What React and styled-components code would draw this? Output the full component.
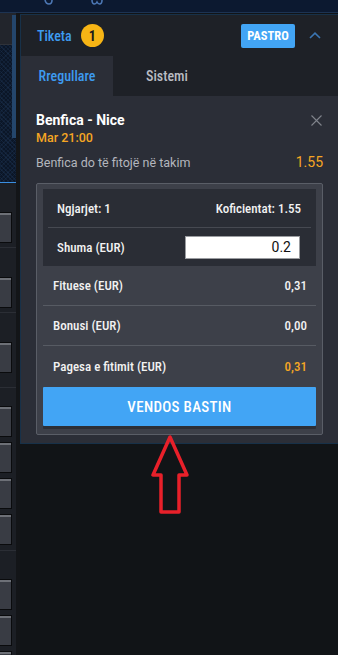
import React from 'react'
import styled, { createGlobalStyle } from 'styled-components'

const cond = `"Roboto Condensed", "Noto Sans", "DejaVu Sans Condensed", sans-serif`

const GlobalStyle = createGlobalStyle`
  html, body {
    margin: 0;
    padding: 0;
    background: #111417;
  }
  body {
    font-family: Roboto, "Noto Sans", sans-serif;
    width: 338px;
    height: 655px;
    overflow: hidden;
  }
`

const Page = styled.div`
  height: 655px;
  display: flex;
  flex-direction: column;
`

const TopBar = styled.div`
  height: 12px;
  flex: none;
  background: #0c1930;
  border-bottom: 1px solid #1d3352;
  display: flex;
  align-items: flex-start;
  overflow: hidden;
`

const TopIcon = styled.svg`
  margin-left: ${p => p.$gap}px;
  flex: none;
`

const Main = styled.div`
  flex: 1;
  display: flex;
  min-height: 0;
`

const Side = styled.div`
  width: 16px;
  flex: none;
  background: #1c1f25;
  display: flex;
  flex-direction: column;
  position: relative;
  overflow: hidden;
`

const SideHead = styled.div`
  height: 31px;
  flex: none;
  background: #22252c;
  border-bottom: 1px solid #2f3239;
`

const SidePattern = styled.div`
  height: 137px;
  flex: none;
  background-color: #0b1627;
  background-image: repeating-linear-gradient(45deg, rgba(40, 70, 110, 0.25) 0 1px, transparent 1px 3px),
    repeating-linear-gradient(-45deg, rgba(40, 70, 110, 0.2) 0 1px, transparent 1px 3px);
  border-bottom: 1px solid #3a8ee0;
`

const Scrollbar = styled.div`
  position: absolute;
  left: 12px;
  top: 2px;
  width: 4px;
  height: 123px;
  background: #24466c;
`

const SideSection = styled.div`
  height: ${p => p.$h}px;
  flex: none;
  box-sizing: border-box;
  padding-top: ${p => p.$pad}px;
  border-bottom: ${p => (p.$last ? 'none' : '1px solid #2b2e35')};
  display: flex;
  flex-direction: column;
  gap: 5px;
`

const SideBox = styled.div`
  width: 12px;
  height: 31px;
  flex: none;
  box-sizing: border-box;
  background: #393c44;
  border: 1px solid #0a0b0d;
  border-left: none;
  box-shadow: inset 0 2px 0 #6d7077;
`

const Gutter = styled.div`
  width: 4px;
  flex: none;
  background: #131518;
`

const Content = styled.div`
  flex: 1;
  position: relative;
  display: flex;
  flex-direction: column;
`

const Panel = styled.section`
  margin-top: 1px;
  border: 1px solid #173149;
  border-right: none;
  background: #2b2e37;
`

const PanelHeader = styled.div`
  height: 41px;
  background: #1e2127;
  display: flex;
  align-items: center;
  padding: 0 17px 0 16px;
`

const Title = styled.span`
  font-family: ${cond};
  font-stretch: condensed;
  font-size: 14px;
  font-weight: 500;
  color: #3d9bf0;
`

const Badge = styled.span`
  margin-left: 9px;
  width: 23px;
  height: 23px;
  border-radius: 50%;
  background: #f7b515;
  color: #1b1b1b;
  font-family: ${cond};
  font-stretch: condensed;
  font-size: 14px;
  font-weight: 700;
  display: flex;
  align-items: center;
  justify-content: center;
`

const Spacer = styled.div`
  flex: 1;
`

const ClearButton = styled.button`
  width: 54px;
  height: 24px;
  border: none;
  border-radius: 2px;
  background: #42a5f5;
  color: #fff;
  font-family: ${cond};
  font-stretch: condensed;
  font-size: 12.5px;
  font-weight: 700;
  padding: 0;
`

const Chevron = styled.svg`
  margin-left: 14px;
`

const Tabs = styled.div`
  height: 40px;
  background: #1e2127;
  display: flex;
`

const Tab = styled.div`
  width: ${p => p.$w}px;
  display: flex;
  align-items: center;
  justify-content: center;
  background: ${p => (p.$active ? '#2b2e37' : 'transparent')};
  color: ${p => (p.$active ? '#3d9bf0' : '#b9bcc3')};
  font-family: ${cond};
  font-stretch: condensed;
  font-size: 14px;
  font-weight: 500;
`

const Body = styled.div`
  padding: 15px 15px 8px 15px;
`

const EventHead = styled.div`
  display: flex;
  justify-content: space-between;
  align-items: flex-start;
`

const EventName = styled.div`
  font-size: 14px;
  font-weight: 700;
  color: #fff;
  line-height: 19px;
`

const EventTime = styled.div`
  font-size: 12.5px;
  font-weight: 500;
  color: #f5a623;
  line-height: 15px;
`

const CloseIcon = styled.svg`
  margin-top: 4px;
  margin-right: 1px;
`

const Selection = styled.div`
  margin-top: 9px;
  display: flex;
  justify-content: space-between;
  align-items: baseline;
  line-height: 16px;
`

const Pick = styled.span`
  font-size: 12.5px;
  color: #b3b6bd;
`

const Odd = styled.span`
  font-size: 14px;
  color: #f5a623;
`

const Summary = styled.div`
  margin-top: 12px;
  border: 1px solid #5a5e67;
  border-radius: 2px;
  background: #3d4049;
  padding: 5px 6px 8px 6px;
`

const InnerTop = styled.div`
  background: #2a2d35;
`

const InfoRow = styled.div`
  height: 38px;
  display: flex;
  align-items: center;
  justify-content: space-between;
  padding: 0 ${p => p.$right}px 0 14px;
  font-family: ${cond};
  font-stretch: condensed;
  font-size: 13px;
  font-weight: 500;
  color: #f2f2f2;
`

const Divider = styled.div`
  height: 1px;
  margin: 0 5px;
  background: #464951;
`

const StakeInput = styled.input`
  width: 115px;
  height: 23px;
  box-sizing: border-box;
  border: 1px solid #9a9ca0;
  background: #fff;
  text-align: right;
  padding: 0 8px;
  font-family: Roboto, sans-serif;
  font-size: 14px;
  color: #111;
  outline: none;
`

const StatRow = styled.div`
  height: 40px;
  box-sizing: border-box;
  display: flex;
  align-items: center;
  justify-content: space-between;
  padding: 0 9px 0 10px;
  border-bottom: ${p => (p.$last ? 'none' : '1px solid #575b63')};
  font-family: ${cond};
  font-stretch: condensed;
  font-size: 13px;
  font-weight: 500;
  color: #f2f2f2;
`

const StatValue = styled.span`
  color: ${p => (p.$accent ? '#f5a623' : '#f2f2f2')};
`

const PlaceButton = styled.button`
  margin-top: 1px;
  width: 100%;
  height: 39px;
  border: none;
  border-radius: 1px;
  background: #42a5f5;
  box-shadow: 0 3px 0 #2c2f36;
  color: #fff;
  font-family: ${cond};
  font-stretch: condensed;
  font-size: 15px;
  font-weight: 500;
  letter-spacing: 0.3px;
`

const Arrow = styled.svg`
  position: absolute;
  left: 130px;
  top: 420px;
`

const sideSections = [
  { h: 65, pad: 29, boxes: 1 },
  { h: 65, pad: 29, boxes: 1 },
  { h: 75, pad: 29, boxes: 1 },
  { h: 163, pad: 18, boxes: 4 },
  { h: 110, pad: 28, boxes: 3, last: true },
]

function SideColumn() {
  return (
    <Side>
      <SideHead />
      <SidePattern />
      {sideSections.map((s, i) => (
        <SideSection key={i} $h={s.h} $pad={s.pad} $last={s.last}>
          {Array.from({ length: s.boxes }).map((_, j) => (
            <SideBox key={j} />
          ))}
        </SideSection>
      ))}
      <Scrollbar />
    </Side>
  )
}

export default function App() {
  return (
    <Page>
      <GlobalStyle />
      <TopBar>
        <TopIcon $gap={44} width="9" height="5" viewBox="0 0 9 5">
          <path d="M1 0 Q2 4 5 4 Q8 4 8 0" fill="none" stroke="#4d78b5" strokeWidth="1.6" />
        </TopIcon>
        <TopIcon $gap={38} width="12" height="5" viewBox="0 0 12 5">
          <path d="M1 0 Q1 4 3.5 4 Q5 4 6 2 Q7 4 8.5 4 Q11 4 11 0" fill="none" stroke="#4d78b5" strokeWidth="1.6" />
        </TopIcon>
      </TopBar>
      <Main>
        <SideColumn />
        <Gutter />
        <Content>
          <Panel>
            <PanelHeader>
              <Title>Tiketa</Title>
              <Badge>1</Badge>
              <Spacer />
              <ClearButton>PASTRO</ClearButton>
              <Chevron width="12" height="7" viewBox="0 0 12 7">
                <path d="M1 6 L6 1.2 L11 6" fill="none" stroke="#3b76b3" strokeWidth="1.6" />
              </Chevron>
            </PanelHeader>
            <Tabs>
              <Tab $w={92} $active>Rregullare</Tab>
              <Tab $w={108}>Sistemi</Tab>
            </Tabs>
            <Body>
              <EventHead>
                <div>
                  <EventName>Benfica - Nice</EventName>
                  <EventTime>Mar 21:00</EventTime>
                </div>
                <CloseIcon width="11" height="11" viewBox="0 0 11 11">
                  <path d="M0.5 0.5 L10.5 10.5 M10.5 0.5 L0.5 10.5" stroke="#80848c" strokeWidth="1.1" />
                </CloseIcon>
              </EventHead>
              <Selection>
                <Pick>Benfica do të fitojë në takim</Pick>
                <Odd>1.55</Odd>
              </Selection>
              <Summary>
                <InnerTop>
                  <InfoRow $right={15}>
                    <span>Ngjarjet: 1</span>
                    <span>Koficientat: 1.55</span>
                  </InfoRow>
                  <Divider />
                  <InfoRow $right={16}>
                    <span>Shuma (EUR)</span>
                    <StakeInput defaultValue="0.2" />
                  </InfoRow>
                </InnerTop>
                <StatRow>
                  <span>Fituese (EUR)</span>
                  <StatValue>0,31</StatValue>
                </StatRow>
                <StatRow>
                  <span>Bonusi (EUR)</span>
                  <StatValue>0,00</StatValue>
                </StatRow>
                <StatRow $last>
                  <span>Pagesa e fitimit (EUR)</span>
                  <StatValue $accent>0,31</StatValue>
                </StatRow>
                <PlaceButton>VENDOS BASTIN</PlaceButton>
              </Summary>
            </Body>
          </Panel>
          <Arrow width="42" height="84" viewBox="0 0 42 84">
            <path
              d="M20 4 L3 42 L11 42 L11 79 L29 79 L29 42 L37 42 Z"
              fill="none"
              stroke="#e8202a"
              strokeWidth="3.5"
              strokeLinejoin="round"
            />
          </Arrow>
        </Content>
      </Main>
    </Page>
  )
}
